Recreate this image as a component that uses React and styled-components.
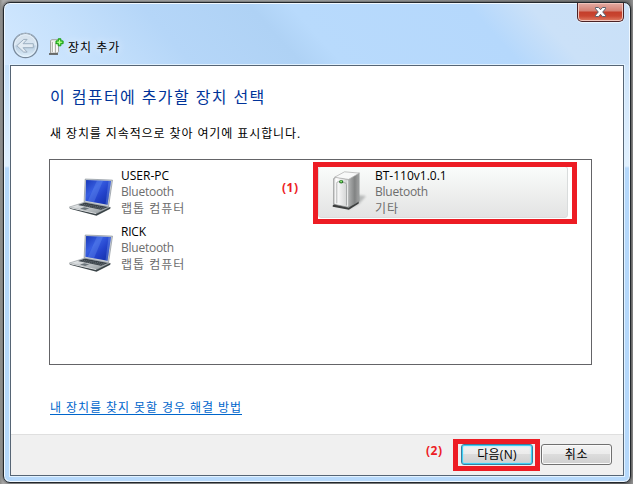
import React from 'react';
import styled, { createGlobalStyle } from 'styled-components';

const GlobalStyle = createGlobalStyle`
  * { box-sizing: border-box; }
  body {
    margin: 0;
    width: 633px;
    height: 484px;
    overflow: hidden;
    background: linear-gradient(90deg, #8b8b88 0, #aaa 3px, #a6aaab 300px, #777 629px, #929292 633px);
    font-family: "Open Sans", "Noto Sans CJK KR", sans-serif;
    font-size: 12px;
    color: #000;
  }
`;

const Window = styled.div`
  width: 628px;
  height: 481px;
  margin: 2px 0 0 3px;
  padding: 0 6px 6px;
  border: 1px solid #23282d;
  border-radius: 7px;
  box-shadow: inset 0 0 0 1px #f0f8ff, 0 0 3px #333;
  background:
    linear-gradient(180deg, #cee4fa 0, #e0f0fe 101px, #b5d8fb 103px, #b5d8fb 100%) right 0 top 62px / 8px 420px no-repeat,
    linear-gradient(180deg, #c5e0fa 0, #e0f0fe 101px, #b5d8fb 103px, #b5d8fb 100%) left 0 top 62px / 8px 420px no-repeat,
    linear-gradient(0deg, #b7d9fb 0, #b7d9fb 8px, transparent 8px),
    linear-gradient(48deg, #d4e9ff 0, #c6e1fc 14%, #b5d6f8 28%, #afd2f5 44%, #b8dafc 50%, #b5d8fc 76%, #cbe1f8 85%, #c9e0f8 100%) 0 0 / 100% 64px no-repeat;
`;

const TitleBar = styled.header`
  display: flex;
  height: 62px;
  justify-content: space-between;
`;

const TitleGroup = styled.div`
  display: flex;
  align-items: flex-start;
  padding: 29px 0 0 2px;
`;

const DeviceSvg = styled.svg`
  margin: 6px 0 0 10px;
  flex: none;
`;

const Label = styled.span`
  display: block;
  flex: none;
  white-space: nowrap;
  font-size: ${(p) => p.$size || 12}px;
  line-height: ${(p) => p.$line || 16}px;
  letter-spacing: ${(p) => p.$track || 0}px;
  color: ${(p) => p.$color || '#000'};
`;

const WindowTitle = styled(Label)`
  margin: 8px 0 0 3px;
  text-shadow: 0 0 8px #fff;
`;

const CloseButton = styled.button`
  width: 47px;
  height: 19px;
  padding: 0;
  display: flex;
  align-items: center;
  justify-content: center;
  border: 1px solid #4b2226;
  border-top: 0;
  border-radius: 0 0 5px 5px;
  background: linear-gradient(180deg, #e4aca4 0, #d48072 8px, #c43e2b 9px, #c94631 13px, #e58a71 19px);
  box-shadow: inset 0 0 0 1px #f1c5bc, 0 1px 1px #eef7ff;
`;

const Client = styled.main`
  display: flex;
  flex-direction: column;
  width: 614px;
  height: 411px;
  border: 1px solid #566575;
  background: #fff;
  box-shadow: 0 0 0 1px #e2f2ff;
`;

const Body = styled.section`
  height: 368px;
  padding: 19px 31px 0 38px;
`;

const Heading = styled(Label).attrs({ as: 'h1' })`
  margin: 0 0 0 1px;
  font-weight: 400;
`;

const Intro = styled(Label)`
  margin: 17px 0 0 1px;
`;

const DeviceList = styled.div`
  display: grid;
  grid-template-columns: 266px 254px;
  grid-template-rows: 56px 56px;
  align-content: start;
  width: 543px;
  height: 206px;
  margin-top: 17px;
  padding: 6px 0 0 4px;
  border: 1px solid #646467;
`;

const Device = styled.div`
  display: flex;
  width: 250px;
  height: 52px;
  margin-left: ${(p) => (p.$selected ? '-2px' : '0')};
  padding-left: ${(p) => (p.$selected ? '2px' : '12px')};
  border: 1px solid ${(p) => (p.$selected ? '#d9dcdc' : 'transparent')};
  border-radius: 3px;
  background: ${(p) => (p.$selected ? 'linear-gradient(180deg, #fafcfb, #e3e3e3)' : 'none')};
`;

const DeviceIcon = styled.div`
  width: 54px;
  height: 50px;
  flex: none;
`;

const DeviceText = styled.div`
  padding-top: 1px;
`;

const HelpLink = styled.a`
  display: block;
  width: 192px;
  height: 15px;
  margin: 35px 0 0 1px;
  border-bottom: 1px solid #0066cc;
`;

const Footer = styled.footer`
  display: flex;
  flex: 1;
  justify-content: flex-end;
  gap: 8px;
  padding: 9px 11px 0 0;
  border-top: 1px solid #dfdfdf;
  background: #f0f0f0;
`;

const Button = styled.button`
  width: ${(p) => (p.$primary ? 72 : 71)}px;
  height: 21px;
  padding: 0;
  display: flex;
  align-items: center;
  justify-content: center;
  font-family: inherit;
  border: 1px solid ${(p) => (p.$primary ? '#377f9f' : '#707070')};
  border-radius: 3px;
  background: linear-gradient(180deg, #f3f3f3 0, #ebebeb 49%, #dcdcdc 50%, #cfcfcf 100%);
  box-shadow: ${(p) => (p.$primary ? 'inset 0 0 0 1px #3ed0f6, inset 0 0 2px 1px #8de3fa' : 'inset 0 0 0 1px #fafafa')};
`;

const Highlight = styled.div`
  position: absolute;
  left: ${(p) => p.$x}px;
  top: ${(p) => p.$y}px;
  width: ${(p) => p.$w}px;
  height: ${(p) => p.$h}px;
  border: 5px solid #ed1c24;
  pointer-events: none;
`;

const StepNumber = styled.span`
  position: absolute;
  left: ${(p) => p.$x}px;
  top: ${(p) => p.$y}px;
  font-size: 12px;
  font-weight: 700;
  line-height: 16px;
  letter-spacing: 0.5px;
  color: #ed1c24;
`;

const BackIcon = () => (
  <svg width="27" height="27" viewBox="0 0 27 27">
    <defs>
      <linearGradient id="back" x2="0" y2="1">
        <stop stopColor="#d9e3ed" /><stop offset=".48" stopColor="#d7e5f1" />
        <stop offset=".52" stopColor="#b9cde0" /><stop offset="1" stopColor="#e1f2fe" />
      </linearGradient>
    </defs>
    <circle cx="13.5" cy="13.5" r="12.2" fill="url(#back)" stroke="#77889a" strokeWidth="1.3" />
    <path d="M3.5 7.5a11.2 11.2 0 0 1 20 0" fill="none" stroke="#a9b6c3" />
    <circle cx="13.5" cy="13.5" r="10.8" fill="none" stroke="#e9f4fd" strokeWidth=".8" />
    <path d="M4.8 13.7 11.7 7.4h3.4l-4 4.3h10.2v4H11.1l4.1 4.4h-3.5z" fill="#e2ebf3" stroke="#9caebf" strokeWidth="1" strokeLinejoin="round" />
  </svg>
);

const AddDeviceIcon = () => (
  <DeviceSvg width="16" height="18" viewBox="0 0 16 18">
    <path d="M1.5 2.5 3 1.7h6.5v12L8 15.2H1.5z" fill="#eee" stroke="#a2a39f" />
    <path d="M3.4 4v10M6.5 5v10" stroke="#b0b1a9" />
    <path d="M4.5 4.5v9.5M8 5v9" stroke="#fff" />
    <path d="M0 16h9" stroke="#5b5b58" strokeWidth="1.7" />
    <path d="M9.2.8h2.7v2.1h2.2v2.8h-2.2v2.1H9.2V5.7H7V2.9h2.2z" fill="#5cdb3b" stroke="#149b15" />
    <path d="M10.5 2v4.5M8.3 4.3h4.5" stroke="#baff99" />
  </DeviceSvg>
);

const CloseIcon = () => (
  <svg width="13" height="12" viewBox="0 0 13 12">
    <path d="M1.5 1.5h3l2 2.2 2-2.2h3v1.3L8.7 6l2.8 3.2v1.3h-3l-2-2.2-2 2.2h-3V9.2L4.3 6 1.5 2.8z" fill="#fff" stroke="#59616d" strokeLinejoin="round" />
  </svg>
);

const LaptopIcon = ({ id }) => (
  <svg width="54" height="50" viewBox="-1 -6.5 54 50">
    <defs>
      <linearGradient id={`screen-${id}`} x1="0" y1="0" x2="1" y2="1">
        <stop stopColor="#1938b7" /><stop offset=".35" stopColor="#375ee1" />
        <stop offset=".6" stopColor="#2444cc" /><stop offset="1" stopColor="#102ca3" />
      </linearGradient>
      <linearGradient id={`base-${id}`} x2="1" y2=".7">
        <stop stopColor="#f8fafb" /><stop offset="1" stopColor="#949b9f" />
      </linearGradient>
    </defs>
    <path d="m1.5 33.5 15-4.8L42.3 34 28 40.2z" fill={`url(#base-${id})`} stroke="#8c9295" strokeWidth=".6" />
    <path d="m1.3 34 27 6.2 14-6.8v1.8l-13.8 7.1L2 35.2z" fill="#3b4448" />
    <path d="m2 34.2 26 5.8" stroke="#d5d8da" />
    <path d="m10 31.6 7-2.6 23 4.6-7 2.7z" fill="#343c43" />
    <path d="m11.5 31.4 23.5 4M14 30.4l23 4" stroke="#81898e" strokeWidth=".6" strokeDasharray="1.2 .7" />
    <path d="m12 35 4.3-1.3 5 1.1-4.2 1.6z" fill="#6c757b" />
    <path d="m17.2 5.5 27.3 1.1-4 26.7-24.4-4.7z" fill="#c7cdd2" stroke="#7d8790" strokeWidth=".6" />
    <path d="m18.1 6.5 24.9 1-3.5 23.8-22.1-4.1z" fill={`url(#screen-${id})`} />
    <path d="m29 7 6 .3-9 21.4-6.2-1.1z" fill="#6993f1" opacity=".34" />
    <path d="m40.5 7.4 2.5.1-3.5 23.8-2-.4z" fill="#7da4ee" opacity=".35" />
  </svg>
);

const ServerIcon = () => (
  <svg width="54" height="50" viewBox="-1 2 54 50">
    <defs>
      <linearGradient id="front"><stop stopColor="#aeb0b0" /><stop offset=".15" stopColor="#fff" /><stop offset="1" stopColor="#c7c9c9" /></linearGradient>
      <linearGradient id="side"><stop stopColor="#b2b4b4" /><stop offset=".6" stopColor="#818383" /><stop offset="1" stopColor="#a4a5a5" /></linearGradient>
      <filter id="shade"><feGaussianBlur stdDeviation="1.2" /></filter>
    </defs>
    <path d="m25 45 12-6 7-8-8-1z" fill="#8d9090" opacity=".55" filter="url(#shade)" />
    <path d="m10.7 40.4 2-1.8 14 3.5 10-5.8v2.2l-9.8 6.3-16.2-3z" fill="#3d3f3f" />
    <path d="m11.7 13.5 2-1.5 14 2.5-.7 28-15.3-3.3z" fill="url(#front)" stroke="#888b8b" strokeWidth=".7" />
    <path d="m26.2 14.4 11-6.5v28.3l-10.5 6z" fill="url(#side)" stroke="#858888" strokeWidth=".5" />
    <path d="m12.5 12.3 10-5.5 14.8 1.3-10.8 6.3z" fill="#f8f9f9" stroke="#aaabab" strokeWidth=".7" />
    <path d="M14.8 38.4V18.2q0-1.6 1.5-1.5l6.6 1.1q1.6.2 1.6 1.8v20.8" fill="none" stroke="#9da0a0" strokeWidth=".8" />
    <path d="M13.1 14.2v24.5M25.8 15.3v26" stroke="#fff" strokeWidth=".8" />
    <ellipse cx="19.2" cy="16.7" rx="2.1" ry="1.7" fill="#237026" /><circle cx="19.1" cy="16.5" r="1" fill="#8eea72" />
  </svg>
);

const DeviceItem = ({ name, kind, icon, selected, track }) => (
  <Device $selected={selected}>
    <DeviceIcon>{icon}</DeviceIcon>
    <DeviceText>
      <Label $track={track}>{name}</Label>
      <Label $color="#6d6d6d" $track={-0.25}>Bluetooth</Label>
      <Label $color="#6d6d6d" $line={17} $track={1}>{kind}</Label>
    </DeviceText>
  </Device>
);

export default function App() {
  return (
    <>
      <GlobalStyle />
      <Window>
        <TitleBar>
          <TitleGroup>
            <BackIcon />
            <AddDeviceIcon />
            <WindowTitle $track={1}>장치 추가</WindowTitle>
          </TitleGroup>
          <CloseButton aria-label="닫기"><CloseIcon /></CloseButton>
        </TitleBar>
        <Client>
          <Body>
            <Heading $size={16} $line={24} $track={1.4} $color="#003399">이 컴퓨터에 추가할 장치 선택</Heading>
            <Intro $track={0.9}>새 장치를 지속적으로 찾아 여기에 표시합니다.</Intro>
            <DeviceList>
              <DeviceItem name="USER-PC" kind="랩톱 컴퓨터" icon={<LaptopIcon id="user" />} track={0} />
              <DeviceItem name="BT-110v1.0.1" kind="기타" icon={<ServerIcon />} selected track={0} />
              <DeviceItem name="RICK" kind="랩톱 컴퓨터" icon={<LaptopIcon id="rick" />} track={-0.2} />
            </DeviceList>
            <HelpLink><Label $color="#0066cc" $track={0.93}>내 장치를 찾지 못할 경우 해결 방법</Label></HelpLink>
          </Body>
          <Footer>
            <Button $primary><Label $track={0.3}>다음(N)</Label></Button>
            <Button><Label $track={0.7}>취소</Label></Button>
          </Footer>
        </Client>
      </Window>
      <Highlight $x={313} $y={162} $w={264} $h={62} />
      <StepNumber $x={282} $y={180}>(1)</StepNumber>
      <Highlight $x={453} $y={439} $w={87} $h={32} />
      <StepNumber $x={426} $y={443}>(2)</StepNumber>
    </>
  );
}
